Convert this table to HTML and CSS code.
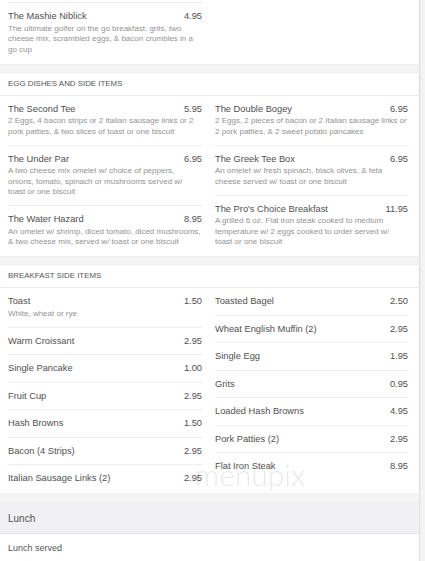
FILE: index.html
```html
<!DOCTYPE html>
<html lang="en">
<head>
<meta charset="utf-8">
<title>Menu</title>
<link rel="stylesheet" href="styles.css">
</head>
<body>
<div class="page">
  <section class="card card-top">
    <div class="cols">
      <ul class="col">
        <li class="item item-cont">
          <div class="item-head"><span class="name">The Mashie Niblick</span><span class="price">4.95</span></div>
          <p class="desc">The ultimate golfer on the go breakfast: grits, two cheese mix, scrambled eggs, &amp; bacon crumbles in a go cup</p>
        </li>
      </ul>
      <ul class="col"></ul>
    </div>
  </section>

  <section class="card card-egg">
    <h2 class="sec-title">EGG DISHES AND SIDE ITEMS</h2>
    <div class="cols">
      <ul class="col">
        <li class="item">
          <div class="item-head"><span class="name">The Second Tee</span><span class="price">5.95</span></div>
          <p class="desc">2 Eggs, 4 bacon strips or 2 Italian sausage links or 2 pork patties, &amp; two slices of toast or one biscuit</p>
        </li>
        <li class="item">
          <div class="item-head"><span class="name">The Under Par</span><span class="price">6.95</span></div>
          <p class="desc">A two cheese mix omelet w/ choice of peppers, onions, tomato, spinach or mushrooms served w/<br>toast or one biscuit</p>
        </li>
        <li class="item">
          <div class="item-head"><span class="name">The Water Hazard</span><span class="price">8.95</span></div>
          <p class="desc">An omelet w/ shrimp, diced tomato, diced mushrooms, &amp; two cheese mix, served w/ toast or one biscuit</p>
        </li>
      </ul>
      <ul class="col">
        <li class="item">
          <div class="item-head"><span class="name">The Double Bogey</span><span class="price">6.95</span></div>
          <p class="desc">2 Eggs, 2 pieces of bacon or 2 Italian sausage links or 2 pork patties, &amp; 2 sweet potato pancakes</p>
        </li>
        <li class="item">
          <div class="item-head"><span class="name">The Greek Tee Box</span><span class="price">6.95</span></div>
          <p class="desc">An omelet w/ fresh spinach, black olives, &amp; feta cheese served w/ toast or one biscuit</p>
        </li>
        <li class="item">
          <div class="item-head"><span class="name">The Pro's Choice Breakfast</span><span class="price">11.95</span></div>
          <p class="desc">A grilled 6 oz. Flat iron steak cooked to medium temperature w/ 2 eggs cooked to order served w/ toast or one biscuit</p>
        </li>
      </ul>
    </div>
  </section>

  <section class="card">
    <h2 class="sec-title">BREAKFAST SIDE ITEMS</h2>
    <div class="cols">
      <ul class="col">
        <li class="item">
          <div class="item-head"><span class="name">Toast</span><span class="price">1.50</span></div>
          <p class="desc">White, wheat or rye</p>
        </li>
        <li class="item"><div class="item-head"><span class="name">Warm Croissant</span><span class="price">2.95</span></div></li>
        <li class="item"><div class="item-head"><span class="name">Single Pancake</span><span class="price">1.00</span></div></li>
        <li class="item"><div class="item-head"><span class="name">Fruit Cup</span><span class="price">2.95</span></div></li>
        <li class="item"><div class="item-head"><span class="name">Hash Browns</span><span class="price">1.50</span></div></li>
        <li class="item"><div class="item-head"><span class="name">Bacon (4 Strips)</span><span class="price">2.95</span></div></li>
        <li class="item"><div class="item-head"><span class="name">Italian Sausage Links (2)</span><span class="price">2.95</span></div></li>
      </ul>
      <ul class="col">
        <li class="item"><div class="item-head"><span class="name">Toasted Bagel</span><span class="price">2.50</span></div></li>
        <li class="item"><div class="item-head"><span class="name">Wheat English Muffin (2)</span><span class="price">2.95</span></div></li>
        <li class="item"><div class="item-head"><span class="name">Single Egg</span><span class="price">1.95</span></div></li>
        <li class="item"><div class="item-head"><span class="name">Grits</span><span class="price">0.95</span></div></li>
        <li class="item"><div class="item-head"><span class="name">Loaded Hash Browns</span><span class="price">4.95</span></div></li>
        <li class="item"><div class="item-head"><span class="name">Pork Patties (2)</span><span class="price">2.95</span></div></li>
        <li class="item"><div class="item-head"><span class="name">Flat Iron Steak</span><span class="price">8.95</span></div></li>
      </ul>
    </div>
  </section>

  <h1 class="menu-title">Lunch</h1>
  <div class="menu-note">Lunch served</div>

  <div class="watermark">menupix</div>
</div>
</body>
</html>
```

FILE: styles.css
```css
* {
  box-sizing: border-box;
}

html, body {
  margin: 0;
  padding: 0;
}

body {
  background: #f3f3f3;
  font-family: "Liberation Sans", Arial, sans-serif;
  color: #555;
}

.page {
  position: relative;
  width: 419px;
  background: #f4f4f4;
  box-shadow: 1px 0 1px rgba(0, 0, 0, 0.08);
}

.card {
  background: #fff;
  margin-bottom: 8px;
  box-shadow: 0 0 1px rgba(0, 0, 0, 0.12);
}

.card-top {
  padding-top: 2px;
  margin-bottom: 9px;
}

.card-egg {
  margin-bottom: 9px;
}

.sec-title {
  margin: 0;
  padding: 5px 8px;
  font-size: 7.9px;
  line-height: 12px;
  font-weight: normal;
  color: #555;
  border-bottom: 1px solid #ececec;
}

.cols {
  display: grid;
  grid-template-columns: 194px 193px;
  column-gap: 13px;
  padding: 0 11px 1px 8px;
}

.col {
  list-style: none;
  margin: 0;
  padding: 0;
}

.item {
  padding: 7px 0 7.5px;
  border-top: 1px solid #ededed;
}

.item:first-child {
  border-top: none;
}

.item.item-cont {
  border-top: 1px solid #ededed;
}

.item-head {
  display: flex;
  justify-content: space-between;
  align-items: baseline;
  font-size: 9.3px;
  line-height: 12px;
  color: #505050;
}

.desc {
  margin: 1.5px 0 0;
  font-size: 8px;
  line-height: 10.5px;
  color: #939393;
}

.menu-title {
  margin: 0;
  padding: 12px 8px 8px;
  font-size: 10px;
  line-height: 12px;
  font-weight: normal;
  color: #505050;
  background: #f1f1f3;
}

.menu-note {
  background: #fff;
  border-top: 1px solid #e6e6e6;
  border-bottom: 1px solid #e6e6e6;
  padding: 8px 8px 7px;
  font-size: 9px;
  line-height: 12px;
  color: #555;
}

.watermark {
  position: absolute;
  left: 195px;
  top: 459px;
  font-family: Lato, "Liberation Sans", sans-serif;
  font-weight: 300;
  font-size: 30px;
  line-height: 30px;
  color: rgba(0, 0, 0, 0.11);
  pointer-events: none;
}
```
